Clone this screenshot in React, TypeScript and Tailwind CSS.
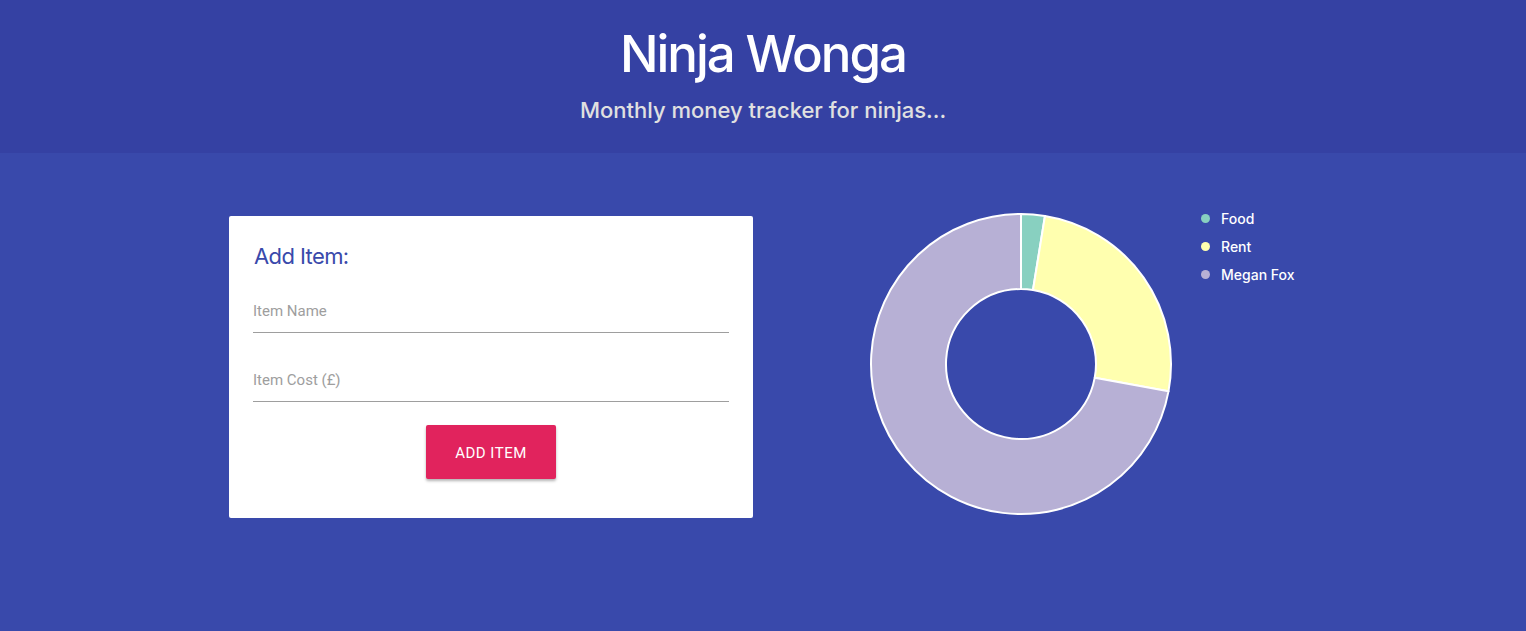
export default function App() {
  const legend = [
    { label: "Food", color: "bg-[#88d0c0]" },
    { label: "Rent", color: "bg-[#ffffaf]" },
    { label: "Megan Fox", color: "bg-[#b7b0d5]" },
  ];

  return (
    <div className="min-h-[631px] bg-[#3949ab] font-['Inter',sans-serif]">
      <header className="h-[153px] bg-[#3541a3] pt-[25px] text-center">
        <h1 className="text-[51px] leading-[57px] font-medium tracking-[-2px] text-white">
          Ninja Wonga
        </h1>
        <p className="mt-[13px] text-[22px] leading-[30px] font-medium tracking-[0px] text-[#e0e0e0]">
          Monthly money tracker for ninjas...
        </p>
      </header>

      <div className="mx-auto mt-[52px] flex w-[1068px] items-start">
        <div className="w-[534px] pt-[11px]">
          <div className="w-[524px] rounded-[2px] bg-white px-[24px] pt-[24px] pb-[39px] font-['Roboto',sans-serif]">
            <h2 className="ml-[1px] font-['Inter',sans-serif] text-[22px] leading-[32px] font-normal tracking-[-0.6px] text-[#3949ab]">
              Add Item:
            </h2>
            <div className="mt-[15px] flex h-[46px] items-center border-b border-[#9e9e9e] pt-[4px] text-[15px] text-[#9e9e9e]">
              Item Name
            </div>
            <div className="mt-[23px] flex h-[46px] items-center border-b border-[#9e9e9e] pt-[4px] text-[15px] text-[#9e9e9e]">
              Item Cost (£)
            </div>
            <div className="mt-[23px] flex justify-center">
              <button className="h-[54px] w-[130px] rounded-[2px] bg-[#e1235d] pt-[2px] text-[15px] tracking-[0.5px] text-white shadow-[0_2px_3px_rgba(0,0,0,0.3)]">
                ADD ITEM
              </button>
            </div>
          </div>
        </div>

        <div className="flex items-start">
          <svg
            width="304"
            height="304"
            viewBox="0 0 304 304"
            className="ml-[106px] mt-[7px]"
          >
            <g stroke="#ffffff" strokeWidth="2" strokeLinejoin="round">
              <path
                d="M152 2 A150 150 0 0 1 175.98 3.93 L163.99 77.97 A75 75 0 0 0 152 77 Z"
                fill="#88d0c0"
              />
              <path
                d="M175.98 3.93 A150 150 0 0 1 299.49 179.34 L225.74 165.67 A75 75 0 0 0 163.99 77.97 Z"
                fill="#ffffaf"
              />
              <path
                d="M299.49 179.34 A150 150 0 1 1 152 2 L152 77 A75 75 0 1 0 225.74 165.67 Z"
                fill="#b7b0d5"
              />
            </g>
          </svg>
          <ul className="ml-[27px] -mt-[1px] flex flex-col">
            {legend.map((item) => (
              <li key={item.label} className="flex h-[28px] items-center text-[14px] font-medium text-white">
                <span className={`mr-[11px] ml-[1px] h-[9px] w-[9px] rounded-full ${item.color}`} />
                {item.label}
              </li>
            ))}
          </ul>
        </div>
      </div>
    </div>
  );
}
